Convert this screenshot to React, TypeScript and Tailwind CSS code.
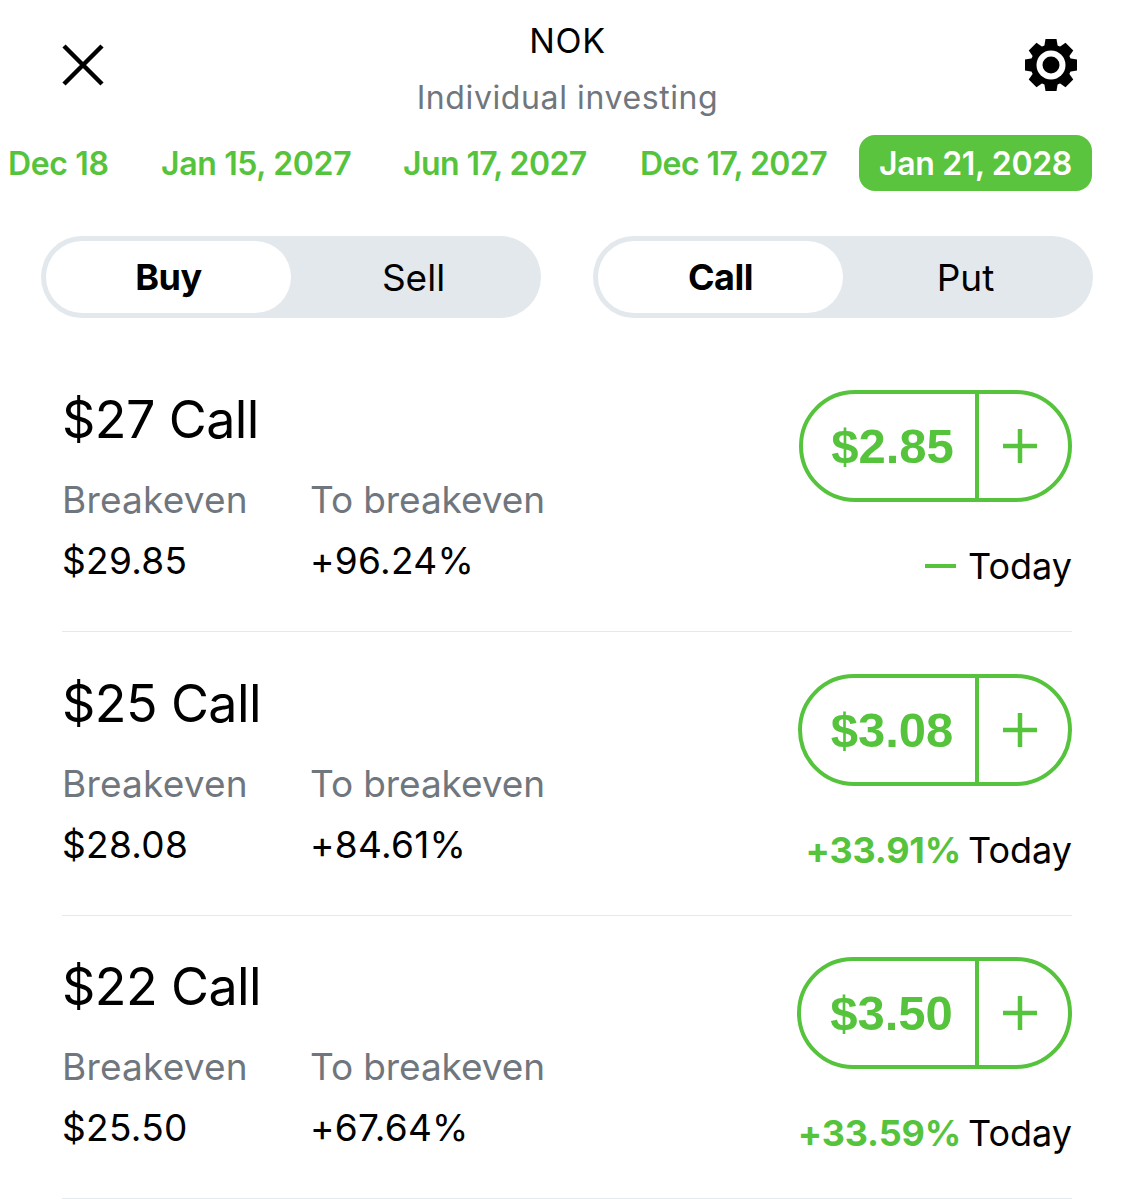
import React from "react";

const GREEN = "text-[#56c33c]";

function Gear() {
  const teeth = [0, 45, 90, 135, 180, 225, 270, 315];
  return (
    <svg width="54" height="54" viewBox="0 0 54 54" aria-hidden="true">
      {teeth.map((a) => (
        <path key={a} d="M21.5 1H32.5L34.5 13H19.5Z" fill="#000" transform={`rotate(${a} 27 27)`} />
      ))}
      <circle cx="27" cy="27" r="20.5" fill="#000" />
      <circle cx="27" cy="27" r="14.5" fill="#fff" />
      <circle cx="27" cy="27" r="8.5" fill="#000" />
    </svg>
  );
}

function Segment({ a, b }: { a: string; b: string }) {
  return (
    <div className="flex h-[82px] w-[500px] rounded-[41px] bg-[#e3e8ed] p-[5px] text-black">
      <div className="flex w-[245px] items-center justify-center rounded-[36px] bg-white text-[36px] font-bold leading-none tracking-[-0.5px]">{a}</div>
      <div className="flex flex-1 items-center justify-center text-[37px] leading-none">{b}</div>
    </div>
  );
}

function Row({ strike, be, tb, price, change, wide }: { strike: string; be: string; tb: string; price: string; change: string; wide: string }) {
  return (
    <div className="box-border flex h-[283.5px] justify-between border-b-[1.5px] border-[#e6e9ec] pt-[41.5px]">
      <div>
        <div className="text-[52px] leading-[60px] tracking-[-0.6px] text-black">${strike} Call</div>
        <div className="mt-[28px] flex text-[37px] leading-[44px]">
          <div className="w-[248px]">
            <div className="tracking-[0.2px] text-[#6f767d]">Breakeven</div>
            <div className="mt-[17px] tracking-[0.3px] text-black">{be}</div>
          </div>
          <div>
            <div className="tracking-[-0.1px] text-[#6f767d]">To breakeven</div>
            <div className="mt-[17px] tracking-[0.3px] text-black">{tb}</div>
          </div>
        </div>
      </div>
      <div className="flex flex-col items-end">
        <div className={`flex h-[112px] rounded-[56px] border-[4px] border-[#56c33c] ${wide} ${GREEN}`}>
          <div className="flex flex-1 items-center justify-center border-r-[4px] border-[#56c33c] pl-[7px] pt-[2px] font-['Liberation_Sans',sans-serif] text-[49px] font-bold">{price}</div>
          <div className="flex w-[89px] items-center justify-center pr-[7px]">
            <svg width="34" height="34" viewBox="0 0 34 34" aria-hidden="true">
              <path d="M17 0V34M0 17H34" stroke="#56c33c" strokeWidth="4.5" />
            </svg>
          </div>
        </div>
        <div className="mt-[42px] flex items-center text-[36px] leading-[44px]">
          {change === "" ? (
            <span className="mr-[12px] h-[4px] w-[31px] bg-[#56c33c]" />
          ) : (
            <span className={`mr-[7px] font-bold tracking-[-0.2px] ${GREEN}`}>{change}</span>
          )}
          <span className="text-black">Today</span>
        </div>
      </div>
    </div>
  );
}

export default function App() {
  return (
    <div className="h-[1200px] w-[1134px] overflow-hidden bg-white font-['Inter',sans-serif]">
      <div className="relative flex h-[135px] items-start justify-between pl-[62px] pr-[56px] pt-[38px]">
        <svg width="42" height="42" viewBox="0 0 42 42" className="mt-[6px]" aria-hidden="true">
          <path d="M2 2L40 40M40 2L2 40" stroke="#000" strokeWidth="4.5" />
        </svg>
        <div className="absolute left-0 right-0 top-[19px] pl-[1px] text-center">
          <div className="text-[34px] leading-[44px] tracking-[0.6px] text-black">NOK</div>
          <div className="mt-[14px] text-[32px] leading-[42px] tracking-[0.6px] text-[#6f767d]">Individual investing</div>
        </div>
        <Gear />
      </div>

      <div className={`flex h-[56px] items-center whitespace-nowrap pl-[8px] pt-[1px] text-[32px] font-semibold tracking-[-0.35px] ${GREEN}`}>
        <span className="w-[153px]">Dec 18</span>
        <span className="w-[242px]">Jan 15, 2027</span>
        <span className="w-[237px] tracking-[-0.6px]">Jun 17, 2027</span>
        <span className="w-[219px] tracking-[-0.55px]">Dec 17, 2027</span>
        <span className="-mt-[1px] flex h-[56px] w-[233px] items-center justify-center rounded-[16px] bg-[#5ac43e] pt-[1px] text-white">Jan 21, 2028</span>
      </div>

      <div className="mt-[45px] flex gap-[52px] pl-[41px]">
        <Segment a="Buy" b="Sell" />
        <Segment a="Call" b="Put" />
      </div>

      <div className="mt-[30.5px] px-[62px]">
        <Row strike="27" be="$29.85" tb="+96.24%" price="$2.85" change="" wide="w-[273px]" />
        <Row strike="25" be="$28.08" tb="+84.61%" price="$3.08" change="+33.91%" wide="w-[274px]" />
        <Row strike="22" be="$25.50" tb="+67.64%" price="$3.50" change="+33.59%" wide="w-[275px]" />
      </div>
    </div>
  );
}
